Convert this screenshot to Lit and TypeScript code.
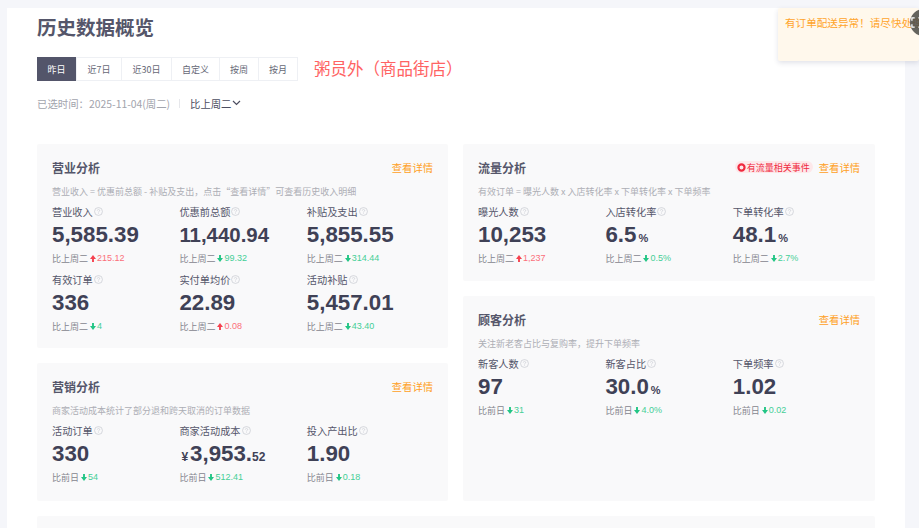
import { LitElement, html, css, svg } from "lit";
import { customElement } from "lit/decorators.js";

type Metric = {
  label: string;
  prefix?: string;
  value: string;
  small?: string;
  unit?: string;
  compare: string;
  dir: "up" | "down";
  delta: string;
};
type Card = {
  title: string;
  desc: string;
  metrics: Metric[];
  event?: boolean;
  cls?: string;
};

const W = "比上周二";
const D = "比前日";

const left: Card[] = [
  {
    title: "营业分析",
    desc: "营业收入 = 优惠前总额 - 补贴及支出，点击“查看详情”可查看历史收入明细",
    cls: "tall",
    metrics: [
      { label: "营业收入", value: "5,585.39", compare: W, dir: "up", delta: "215.12" },
      { label: "优惠前总额", value: "11,440.94", compare: W, dir: "down", delta: "99.32" },
      { label: "补贴及支出", value: "5,855.55", compare: W, dir: "down", delta: "314.44" },
      { label: "有效订单", value: "336", compare: W, dir: "down", delta: "4" },
      { label: "实付单均价", value: "22.89", compare: W, dir: "up", delta: "0.08" },
      { label: "活动补贴", value: "5,457.01", compare: W, dir: "down", delta: "43.40" },
    ],
  },
  {
    title: "营销分析",
    desc: "商家活动成本统计了部分退和跨天取消的订单数据",
    cls: "grow",
    metrics: [
      { label: "活动订单", value: "330", compare: D, dir: "down", delta: "54" },
      { label: "商家活动成本", prefix: "¥", value: "3,953.", small: "52", compare: D, dir: "down", delta: "512.41" },
      { label: "投入产出比", value: "1.90", compare: D, dir: "down", delta: "0.18" },
    ],
  },
];

const right: Card[] = [
  {
    title: "流量分析",
    desc: "有效订单 = 曝光人数 x 入店转化率 x 下单转化率 x 下单频率",
    event: true,
    cls: "short",
    metrics: [
      { label: "曝光人数", value: "10,253", compare: W, dir: "up", delta: "1,237" },
      { label: "入店转化率", value: "6.5", unit: "%", compare: W, dir: "down", delta: "0.5%" },
      { label: "下单转化率", value: "48.1", unit: "%", compare: W, dir: "down", delta: "2.7%" },
    ],
  },
  {
    title: "顾客分析",
    desc: "关注新老客占比与复购率，提升下单频率",
    cls: "grow",
    metrics: [
      { label: "新客人数", value: "97", compare: D, dir: "down", delta: "31" },
      { label: "新客占比", value: "30.0", unit: "%", compare: D, dir: "down", delta: "4.0%" },
      { label: "下单频率", value: "1.02", compare: D, dir: "down", delta: "0.02" },
    ],
  },
];

const tabs = ["昨日", "近7日", "近30日", "自定义", "按周", "按月"];

const help = svg`<svg class="help" viewBox="0 0 10 10" width="9" height="9" aria-hidden="true">
  <circle cx="5" cy="5" r="4.4" fill="none" stroke="#c9cbd3" stroke-width=".8"/>
  <path d="M3.7 3.9a1.3 1.3 0 1 1 2 1.1c-.5.3-.7.5-.7 1" fill="none" stroke="#c9cbd3" stroke-width=".8"/>
  <circle cx="5" cy="7.4" r=".5" fill="#c9cbd3"/>
</svg>`;

const arrow = (dir: "up" | "down") => svg`<svg class="arrow ${dir}" viewBox="0 0 7 8" width="6" height="7" aria-hidden="true">
  <path d=${dir === "up" ? "M3.5 0 7 4.6H4.6V8H2.4V4.6H0Z" : "M3.5 8 7 3.4H4.6V0H2.4V3.4H0Z"} fill="currentColor"/>
</svg>`;

const valueSize = (m: Metric) => (m.value.length > 8 ? 20.4 : 22.3);

@customElement("app-root")
export class AppRoot extends LitElement {
  static styles = css`
    :host {
      display: block;
      width: 919px;
      height: 528px;
      overflow: hidden;
      position: relative;
      background: #f5f6fa;
      font-family: "Noto Sans CJK SC", "Liberation Sans", sans-serif;
      color: #3f4156;
    }
    .sheet {
      box-sizing: border-box;
      margin: 8px 14px 0 7px;
      height: 520px;
      padding: 0 30px;
      background: #fff;
      overflow: hidden;
    }
    h1 {
      margin: 0;
      padding-top: 5px;
      height: 49px;
      box-sizing: border-box;
      font-size: 19.5px;
      line-height: 28px;
      font-weight: 700;
      color: #55566a;
    }
    .tabrow {
      display: flex;
      align-items: center;
      height: 24px;
    }
    .tabs {
      display: flex;
      height: 24px;
      border: solid #eef0f4;
      border-width: 1px 1px 1px 0;
      box-sizing: border-box;
    }
    .tab {
      display: flex;
      align-items: center;
      justify-content: center;
      box-sizing: border-box;
      border-left: 1px solid #eef0f4;
      font-size: 9px;
      color: #666876;
    }
    .tab:first-child {
      border-left: 0;
      margin: -1px 0;
      background: #53556a;
      color: #fff;
    }
    .shop {
      margin: 0 0 3px 16px;
      font-size: 16.5px;
      line-height: 20px;
      color: #ff6363;
    }
    .when {
      display: flex;
      align-items: center;
      height: 16px;
      margin-top: 14px;
      font-size: 10.4px;
      color: #a2a4ad;
    }
    .when .sep {
      width: 1px;
      height: 9px;
      margin: 0 10px 0 9px;
      background: #e6e7eb;
    }
    .when .cmp {
      font-size: 10.3px;
      color: #4b4d60;
    }
    .when svg {
      margin-left: 1px;
    }
    .columns {
      display: grid;
      grid-template-columns: 411px 412px;
      column-gap: 15px;
      height: 357px;
      margin-top: 33px;
    }
    .col {
      display: flex;
      flex-direction: column;
      gap: 15px;
    }
    .card {
      box-sizing: border-box;
      padding: 14px 15px 0;
      border-radius: 2px;
      background: #f9f9fa;
    }
    .card.grow {
      flex: 1;
    }
    .card.tall {
      height: 204px;
    }
    .card.short {
      height: 137px;
    }
    .head {
      display: flex;
      align-items: center;
      height: 18px;
    }
    .title {
      flex: 1;
      font-size: 12px;
      font-weight: 700;
      color: #55566a;
    }
    .link {
      font-size: 10.3px;
      color: #ff9f24;
    }
    .event {
      display: flex;
      align-items: center;
      gap: 1px;
      height: 12px;
      margin-right: 6px;
      padding: 0 3px 0 2px;
      border-radius: 6px;
      background: #fde8ea;
      font-size: 9px;
      color: #f0293e;
    }
    .desc {
      margin-top: 9px;
      height: 14px;
      font-size: 9px;
      line-height: 14px;
      color: #adaeb5;
      white-space: nowrap;
    }
    .metrics {
      display: grid;
      grid-template-columns: repeat(3, 127.4px);
      margin-top: 4px;
    }
    .metric {
      height: 66.4px;
      padding-top: 2px;
    }
    .label {
      display: flex;
      align-items: center;
      gap: 1px;
      height: 13px;
      font-size: 10.2px;
      color: #55566a;
      white-space: nowrap;
    }
    .value {
      display: flex;
      align-items: baseline;
      height: 30px;
      margin-top: 2px;
      font-family: "Liberation Sans", sans-serif;
      line-height: 30px;
      font-weight: 700;
      color: #3f4156;
      white-space: nowrap;
    }
    .value .prefix {
      margin: 0 2px 0 2px;
      font-size: 12px;
    }
    .value .small {
      font-size: 12px;
    }
    .value .unit {
      margin-left: 2px;
      font-size: 11px;
    }
    .compare {
      display: flex;
      align-items: center;
      height: 14px;
      margin-top: 1px;
      font-size: 9px;
      color: #85868f;
      white-space: nowrap;
    }
    .compare svg {
      margin: 0 1px 0 2px;
    }
    .compare .delta {
      font-family: "Liberation Sans", sans-serif;
    }
    .compare .up {
      color: #f5414f;
    }
    .compare .down {
      color: #22c585;
    }
    .compare .delta.up {
      color: #fb6f7b;
    }
    .compare .delta.down {
      color: #45cf97;
    }
    .bottom {
      height: 40px;
      margin-top: 15px;
      border-radius: 2px;
      background: #f9f9fa;
    }
    .toast {
      position: absolute;
      top: 8px;
      left: 778px;
      box-sizing: border-box;
      width: 141px;
      height: 53px;
      padding: 8px 0 0 7px;
      background: #fff8ec;
      box-shadow: 0 2px 5px rgba(70, 75, 110, 0.16);
      font-size: 10.6px;
      line-height: 14px;
      color: #ffa42b;
      white-space: nowrap;
      overflow: hidden;
      border-radius: 2px;
    }
    .fab {
      position: absolute;
      top: 9px;
      left: 910px;
      display: flex;
      align-items: center;
      justify-content: center;
      width: 27px;
      height: 27px;
      border-radius: 50%;
      background: rgba(80, 78, 74, 0.88);
    }
    .fab svg {
      position: relative;
      left: -7px;
    }
  `;

  private metric(m: Metric) {
    return html`<div class="metric">
      <div class="label">${m.label}${help}</div>
      <div class="value" style="font-size:${valueSize(m)}px">
        ${m.prefix ? html`<span class="prefix">${m.prefix}</span>` : ""}
        <span>${m.value}</span>
        ${m.small ? html`<span class="small">${m.small}</span>` : ""}
        ${m.unit ? html`<span class="unit">${m.unit}</span>` : ""}
      </div>
      <div class="compare">
        <span>${m.compare}</span>${arrow(m.dir)}<span class="delta ${m.dir}">${m.delta}</span>
      </div>
    </div>`;
  }

  private card(c: Card) {
    return html`<section class="card ${c.cls ?? ""}">
      <div class="head">
        <div class="title">${c.title}</div>
        ${c.event
          ? html`<div class="event">
              <svg viewBox="0 0 10 10" width="9" height="9" aria-hidden="true">
                <circle cx="5" cy="5" r="3.4" fill="none" stroke="#f0293e" stroke-width="2.4" />
              </svg>
              有流量相关事件
            </div>`
          : ""}
        <div class="link">查看详情</div>
      </div>
      <div class="desc">${c.desc}</div>
      <div class="metrics">${c.metrics.map((m) => this.metric(m))}</div>
    </section>`;
  }

  render() {
    const widths = [39, 45, 50, 48, 39, 39];
    return html`
      <div class="sheet">
        <h1>历史数据概览</h1>
        <div class="tabrow">
          <div class="tabs">
            ${tabs.map((t, i) => html`<div class="tab" style="width:${widths[i]}px">${t}</div>`)}
          </div>
          <div class="shop">粥员外（商品街店）</div>
        </div>
        <div class="when">
          <span>已选时间：2025-11-04(周二)</span>
          <span class="sep"></span>
          <span class="cmp">比上周二</span>
          <svg viewBox="0 0 9 6" width="9" height="6" aria-hidden="true">
            <path d="M1 1l3.5 3.5L8 1" fill="none" stroke="#4b4d60" stroke-width="1.2" />
          </svg>
        </div>
        <div class="columns">
          <div class="col">${left.map((c) => this.card(c))}</div>
          <div class="col">${right.map((c) => this.card(c))}</div>
        </div>
        <div class="bottom"></div>
      </div>
      <div class="toast">有订单配送异常！请尽快处理</div>
      <div class="fab">
        <svg viewBox="0 0 12 12" width="11" height="11" aria-hidden="true">
          <path d="M1 4V1h3M8 1h3v3M11 8v3H8M4 11H1V8" fill="none" stroke="#fff" stroke-width="1.4" />
        </svg>
      </div>
    `;
  }
}
